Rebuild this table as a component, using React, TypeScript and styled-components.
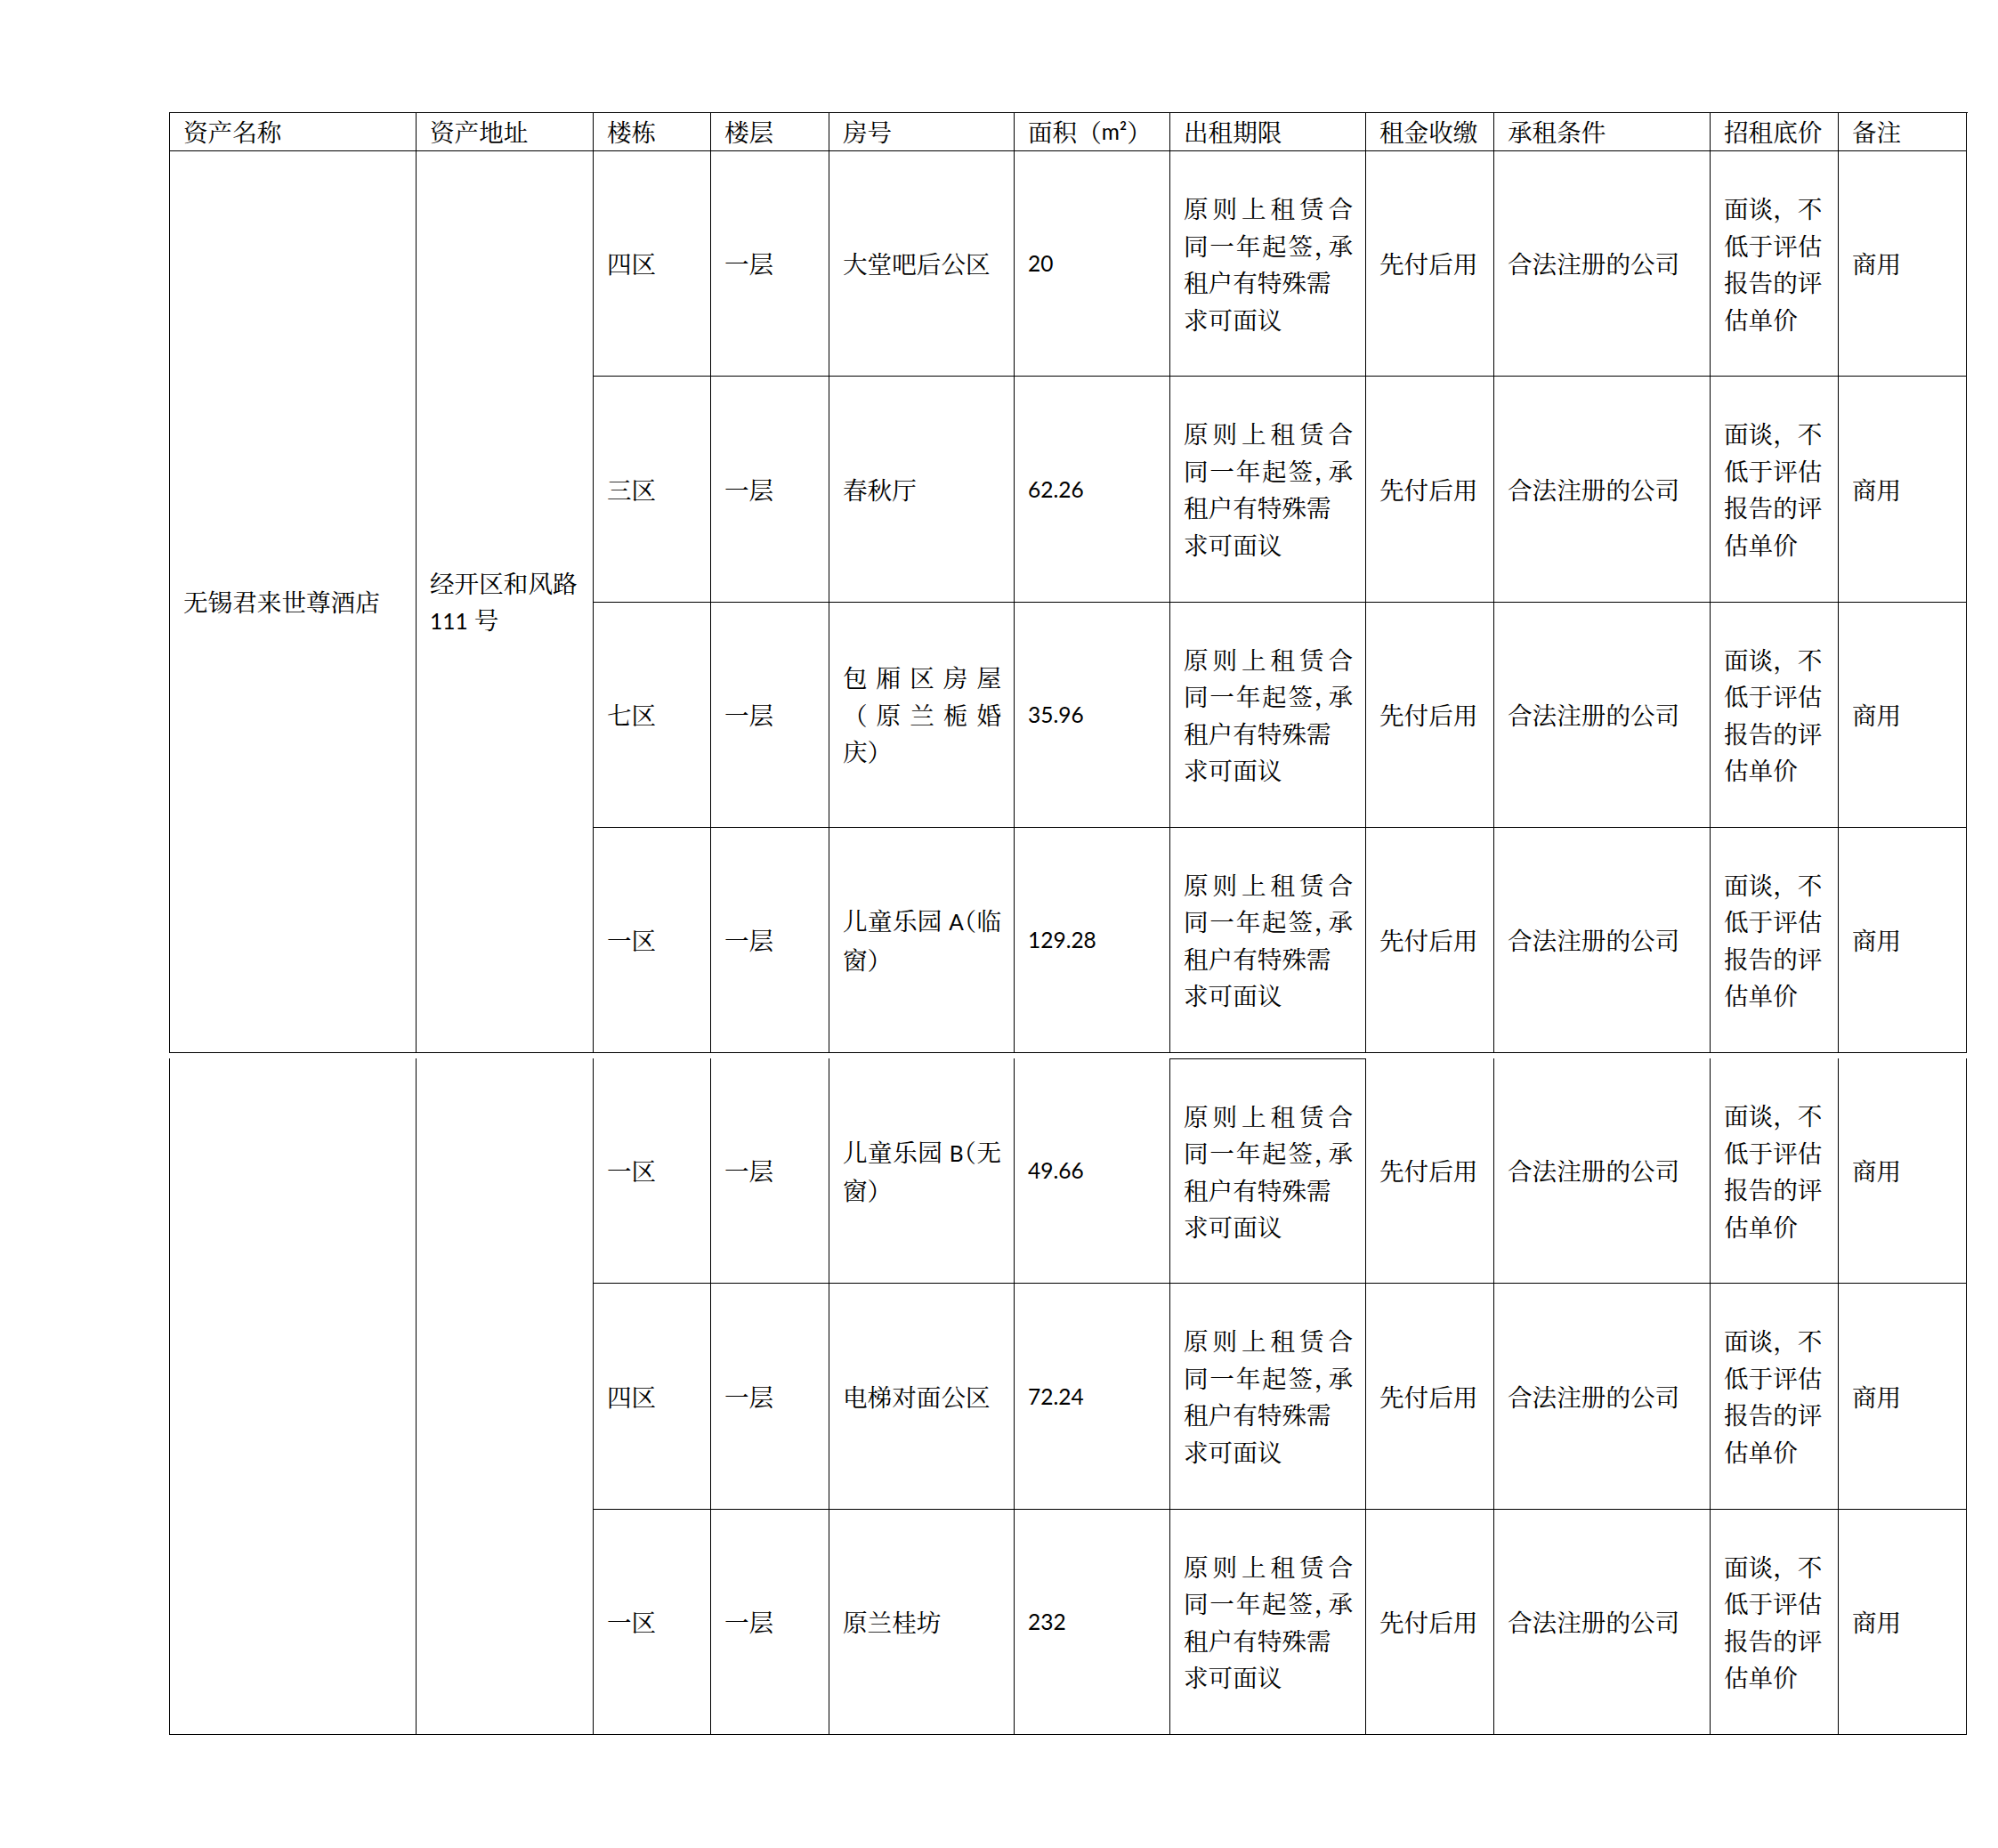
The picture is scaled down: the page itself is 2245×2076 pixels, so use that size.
import React from 'react'
import styled, { createGlobalStyle } from 'styled-components'

const GlobalStyle = createGlobalStyle`
  html, body {
    margin: 0;
    padding: 0;
    background: #fff;
  }
  body {
    font-family: "Noto Serif CJK SC", "Noto Sans CJK SC", serif;
    color: #000;
  }
`

const Page = styled.div`
  padding: 126px 0 80px 190px;
`

const Sheet = styled.div<{ $rows: string; $top?: boolean }>`
  display: grid;
  width: 2020px;
  grid-template-columns: 277px 199px 132px 133px 208px 175px 220px 144px 243px 144px 144px;
  grid-template-rows: ${({ $rows }) => $rows};
  border-left: 1px solid #000;
  border-top: ${({ $top }) => ($top ? '1px solid #000' : 'none')};
  & + & {
    margin-top: 6px;
  }
`

const Cell = styled.div<{ $span?: number; $boxed?: boolean }>`
  box-sizing: border-box;
  display: flex;
  align-items: center;
  padding: 0 14px 0 15px;
  border-right: 1px solid #000;
  border-bottom: 1px solid #000;
  border-top: ${({ $boxed }) => ($boxed ? '1px solid #000' : 'none')};
  grid-row: ${({ $span }) => ($span ? `span ${$span}` : 'auto')};
  font-size: 27.6px;
  line-height: 41.5px;
  white-space: nowrap;
`

const HeadCell = styled(Cell)`
  line-height: 1;
`

const Lines = styled.div`
  width: 100%;
`

const TextLine = styled.div<{ $justify?: boolean }>`
  text-align: ${({ $justify }) => ($justify ? 'justify' : 'left')};
  text-align-last: ${({ $justify }) => ($justify ? 'justify' : 'auto')};
  white-space: normal;
`

// numbers and latin letters were set in Calibri in the source document
const Latin = styled.span`
  font-family: Lato, "Liberation Sans", sans-serif;
  font-size: 24.5px;
`

// compressed full-width punctuation
const Half = styled.span`
  font-feature-settings: "halt" 1;
`

type Line = { t: React.ReactNode; j?: boolean }

type Row = { zone: string; room: Line[]; area: string }

const headers: React.ReactNode[] = [
  '资产名称',
  '资产地址',
  '楼栋',
  '楼层',
  '房号',
  <>面积（<Latin>m²</Latin>）</>,
  '出租期限',
  '租金收缴',
  '承租条件',
  '招租底价',
  '备注',
]

const termLines: Line[] = [
  { t: '原则上租赁合', j: true },
  { t: <>同一年起签<Half>，</Half>承</>, j: true },
  { t: '租户有特殊需' },
  { t: '求可面议' },
]

const priceLines: Line[] = [{ t: '面谈，不' }, { t: '低于评估' }, { t: '报告的评' }, { t: '估单价' }]

const addressLines: Line[] = [{ t: '经开区和风路' }, { t: <><Latin>111</Latin> 号</> }]

const firstBlock: Row[] = [
  { zone: '四区', room: [{ t: '大堂吧后公区' }], area: '20' },
  { zone: '三区', room: [{ t: '春秋厅' }], area: '62.26' },
  {
    zone: '七区',
    room: [{ t: '包厢区房屋', j: true }, { t: '（原兰栀婚', j: true }, { t: '庆）' }],
    area: '35.96',
  },
  {
    zone: '一区',
    room: [{ t: <>儿童乐园 <Latin>A</Latin><Half>（</Half>临</>, j: true }, { t: '窗）' }],
    area: '129.28',
  },
]

const secondBlock: Row[] = [
  {
    zone: '一区',
    room: [{ t: <>儿童乐园 <Latin>B</Latin><Half>（</Half>无</>, j: true }, { t: '窗）' }],
    area: '49.66',
  },
  { zone: '四区', room: [{ t: '电梯对面公区' }], area: '72.24' },
  { zone: '一区', room: [{ t: '原兰桂坊' }], area: '232' },
]

const TextLines = ({ lines }: { lines: Line[] }) => (
  <Lines>
    {lines.map((l, i) => (
      <TextLine key={i} $justify={l.j}>
        {l.t}
      </TextLine>
    ))}
  </Lines>
)

const DataRow = ({ row, boxedTerm }: { row: Row; boxedTerm?: boolean }) => (
  <>
    <Cell>{row.zone}</Cell>
    <Cell>一层</Cell>
    <Cell>
      <TextLines lines={row.room} />
    </Cell>
    <Cell>
      <Latin>{row.area}</Latin>
    </Cell>
    <Cell $boxed={boxedTerm}>
      <TextLines lines={termLines} />
    </Cell>
    <Cell>先付后用</Cell>
    <Cell>合法注册的公司</Cell>
    <Cell>
      <TextLines lines={priceLines} />
    </Cell>
    <Cell>商用</Cell>
  </>
)

const App = () => {
  return (
    <Page>
      <GlobalStyle />
      <Sheet $top $rows="43px repeat(4, 253.25px)">
        {headers.map((h, i) => (
          <HeadCell key={i}>{h}</HeadCell>
        ))}
        <Cell $span={4}>无锡君来世尊酒店</Cell>
        <Cell $span={4}>
          <TextLines lines={addressLines} />
        </Cell>
        {firstBlock.map((row, i) => (
          <DataRow key={i} row={row} />
        ))}
      </Sheet>
      <Sheet $rows="repeat(3, 253.3px)">
        <Cell $span={3} />
        <Cell $span={3} />
        {secondBlock.map((row, i) => (
          <DataRow key={i} row={row} boxedTerm={i === 0} />
        ))}
      </Sheet>
    </Page>
  )
}

export default App
